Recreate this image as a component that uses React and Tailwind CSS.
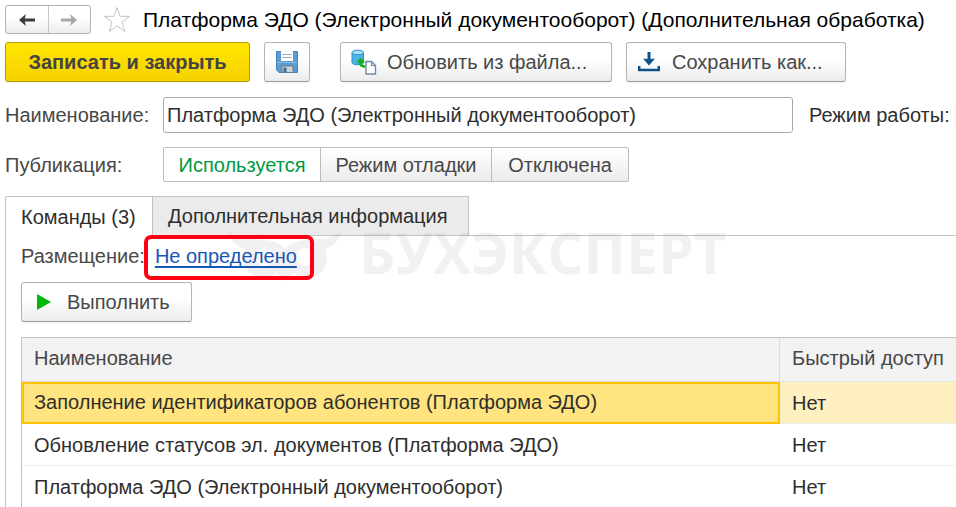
import { useState } from "react";

const raised = "border border-[#b4b4b4] bg-linear-to-b from-white from-40% to-[#ececec] text-[#484848]";
const button = `${raised} flex h-10 items-center rounded-[3px] border-b-[#999] shadow-xs`;

function ArrowIcon({ className }) {
  return (
    <svg viewBox="0 0 16 12" className={className} aria-hidden="true">
      <path d="M0 6 7 0 5.800 4.400H16V7.600H5.800L7 12Z" fill="currentColor" />
    </svg>
  );
}

function FloppyIcon() {
  return (
    <svg viewBox="0 0 22 22" className="size-[22px]" aria-hidden="true">
      <path d="M.5.5h21v21H3L.5 19Z" fill="#5b9bd0" stroke="#4a84b5" />
      <path d="M5 0h12v10H5Z" fill="#fff" />
      <path d="M6.500 3.500h9M6.500 6.500h9" stroke="#8fa9bf" />
      <path d="M1 11.500h20" stroke="#8abbe2" />
      <path d="M6 15h11v6.500H6Z" fill="#c9d1d4" stroke="#54728c" strokeWidth=".8" />
      <path d="M7.500 16.500h3v5h-3Z" fill="#44708f" />
    </svg>
  );
}

function UpdateIcon() {
  return (
    <svg viewBox="0 0 26 26" className="size-[26px]" aria-hidden="true">
      <path d="M1 3.500v10c0 3 11.500 3 11.500 0v-10Z" fill="#4db4e6" stroke="#2a8fc5" />
      <ellipse cx="6.750" cy="3.500" rx="5.750" ry="2.300" fill="#a9e0f8" stroke="#2a8fc5" />
      <path d="M9.500 9 5 13.800h2.700c.5 3.400 2.800 5.200 6.300 4.900v-2.600c-1.800.2-3-.6-3.300-2.300H14Z" fill="#12b212" />
      <path d="M15 12.500h5.500l4 4V25H15Z" fill="#fff" stroke="#7189a3" strokeWidth="1.400" />
      <path d="M20.500 12.500v4h4" fill="none" stroke="#7189a3" strokeWidth="1.200" />
    </svg>
  );
}

function DownloadIcon() {
  return (
    <svg viewBox="0 0 22 20" className="h-5 w-[22px]" aria-hidden="true">
      <path d="M9.500 0h3v7l4.500-.5-6 7L5 6.500l4.500.5Z" fill="#0b5288" />
      <path d="M1.200 14v4h19.600v-4" fill="none" stroke="#0b5288" strokeWidth="2.400" />
    </svg>
  );
}

function Watermark() {
  return (
    <div className="pointer-events-none absolute top-[222px] left-[228px] flex items-center text-[#5a5f78] opacity-[0.08]" aria-hidden="true">
      <svg viewBox="0 0 114 60" className="h-[60px] w-[114px] shrink-0">
        <path d="M1 10c11 8 25 7 36 8 10 1 16 4 20 9 4-5 10-8 20-9 11-1 25 0 36-8-2 9-7 14-16 17a20 20 0 0 1-31 24l-9 8-9-8A20 20 0 0 1 17 27C8 24 3 19 1 10Zm36 16a9 9 0 1 0 0 18 9 9 0 0 0 0-18Zm40 0a9 9 0 1 0 0 18 9 9 0 0 0 0-18Z" fill="currentColor" fillRule="evenodd" />
      </svg>
      <span className="pl-[17px] font-['Open_Sans',sans-serif] text-[57px] leading-[60px] font-bold">БУХЭКСПЕРТ</span>
    </div>
  );
}

const modes = ["Используется", "Режим отладки", "Отключена"];
const commands = [
  "Заполнение идентификаторов абонентов (Платформа ЭДО)",
  "Обновление статусов эл. документов (Платформа ЭДО)",
  "Платформа ЭДО (Электронный документооборот)",
];

export default function App() {
  const [mode, setMode] = useState(modes[0]);
  const [name, setName] = useState("Платформа ЭДО (Электронный документооборот)");

  return (
    <main className="relative flex h-screen flex-col overflow-hidden bg-white pl-[5px] font-['Liberation_Sans',Arial,sans-serif] text-[20px] leading-6 whitespace-nowrap text-[#2e2e2e]">
      <header className="flex h-[37px] shrink-0 items-center pt-0.5">
        <div className={`${raised} flex h-[29px] w-[86px] shrink-0 rounded-[3px]`}>
          <button aria-label="Назад" className="flex flex-1 items-center justify-center border-r border-[#c8c8c8] text-[#3c3c3c]">
            <ArrowIcon className="h-3 w-4" />
          </button>
          <button aria-label="Вперёд" className="flex flex-1 items-center justify-center text-[#a8a8a8]">
            <ArrowIcon className="h-3 w-4 rotate-180" />
          </button>
        </div>
        <button aria-label="В избранное" className="ml-3 shrink-0">
          <svg viewBox="0 0 28 28" className="size-7" aria-hidden="true">
            <path d="m14 1.500 3.100 8.800 9.400.1-7.500 5.700 2.800 9.400-7.800-5.600-7.800 5.600L9 16.100 1.500 10.400l9.400-.1Z" fill="#fff" stroke="#bcc5cd" />
          </svg>
        </button>
        <h1 className="ml-3 text-[21px] text-black">Платформа ЭДО (Электронный документооборот) (Дополнительная обработка)</h1>
      </header>

      <div className="mt-[5px] flex shrink-0">
        <button className="h-10 w-[245px] rounded-[3px] border border-[#b59a00] bg-linear-to-b from-[#ffe600] to-[#f6d200] font-bold text-[#444] shadow-xs">Записать и закрыть</button>
        <button aria-label="Записать" className={`${button} ml-3.5 w-[46px] justify-center`}><FloppyIcon /></button>
        <button className={`${button} ml-[30px] w-[272px] gap-2.5 pl-2.5`}><UpdateIcon />Обновить из файла...</button>
        <button className={`${button} ml-3.5 w-[220px] gap-3 pl-[11px]`}><DownloadIcon />Сохранить как...</button>
      </div>

      <div className="mt-[15px] flex shrink-0 items-center text-[#484848]">
        <label htmlFor="name" className="w-[158px]">Наименование:</label>
        <input id="name" value={name} onChange={(e) => setName(e.target.value)} className="h-9 w-[630px] rounded-[3px] border border-[#a8a8a8] px-[3px] text-[#2e2e2e]" />
        <span className="ml-4 text-[#2e2e2e]">Режим работы:</span>
      </div>

      <div role="radiogroup" aria-labelledby="publication" className="mt-3.5 flex shrink-0 items-center text-[#484848]">
        <span id="publication" className="w-[158px]">Публикация:</span>
        <div className="grid h-[35px] grid-cols-[157px_171px_136px] divide-x divide-[#bcbcbc] rounded-[2px] border border-[#bcbcbc] bg-linear-to-b from-white to-[#ececec]">
          {modes.map((m) => (
            <label key={m} className="relative flex items-center justify-center has-checked:bg-white has-checked:text-[#009a3e]">
              <input type="radio" name="mode" className="absolute inset-0 appearance-none" checked={mode === m} onChange={() => setMode(m)} />
              {m}
            </label>
          ))}
        </div>
      </div>

      <div role="tablist" className="mt-3.5 flex h-10 shrink-0">
        <button role="tab" aria-selected="true" className="w-[147px] rounded-tl-[2px] border-t border-l border-[#c4c4c4] pl-[15px] text-left">Команды (3)</button>
        <button role="tab" aria-selected="false" className="w-[317px] border border-[#c4c4c4] bg-[#ebebeb] pl-[15px] text-left">Дополнительная информация</button>
        <div className="flex-1 border-b border-[#c4c4c4]" />
      </div>

      <section className="flex flex-1 flex-col border-l border-[#c4c4c4] pl-[15px]">
        <div className="flex h-10 shrink-0 items-center text-[#484848]">
          <span>Размещение:</span>
          <a href="#placement" className="ml-2.5 text-[#1458b8] underline decoration-2 underline-offset-[3px] [text-decoration-skip-ink:none]">Не определено</a>
        </div>
        <button className={`${button} mt-1.5 w-[171px] shrink-0 gap-4 pl-[15px]`}>
          <svg viewBox="0 0 14 16" className="h-4 w-3.5" aria-hidden="true"><path d="M0 0 14 8 0 16Z" fill="#00b70b" /></svg>
          Выполнить
        </button>

        <table className="mt-[15px] w-full table-fixed border-separate border-spacing-0 border-t border-l border-[#c0c0c0] text-left">
          <thead>
            <tr className="h-11 bg-[#f2f2f2] text-[#484848]">
              <th className="w-[758px] border-r border-b border-[#dcdcdc] px-3 pb-1 font-normal">Наименование</th>
              <th className="border-b border-[#e4e4e4] px-3 pb-1 font-normal">Быстрый доступ</th>
            </tr>
          </thead>
          <tbody>
            {commands.map((c, i) => (
              <tr key={c} className={i === 0 ? "h-[42px] bg-[#fff0c1]" : "h-[42px]"}>
                <td className={i === 0 ? "border-2 border-[#fcc400] bg-[#ffe480] px-2.5 pb-0.5" : "border-b border-[#eee] px-3"}>{c}</td>
                <td className="border-b border-[#eee] px-3">Нет</td>
              </tr>
            ))}
          </tbody>
        </table>
      </section>

      <Watermark />
      <div className="pointer-events-none absolute top-[235px] left-[144px] h-[45px] w-[170px] rounded-[7px] border-4 border-[#ff0012]" aria-hidden="true" />
    </main>
  );
}
